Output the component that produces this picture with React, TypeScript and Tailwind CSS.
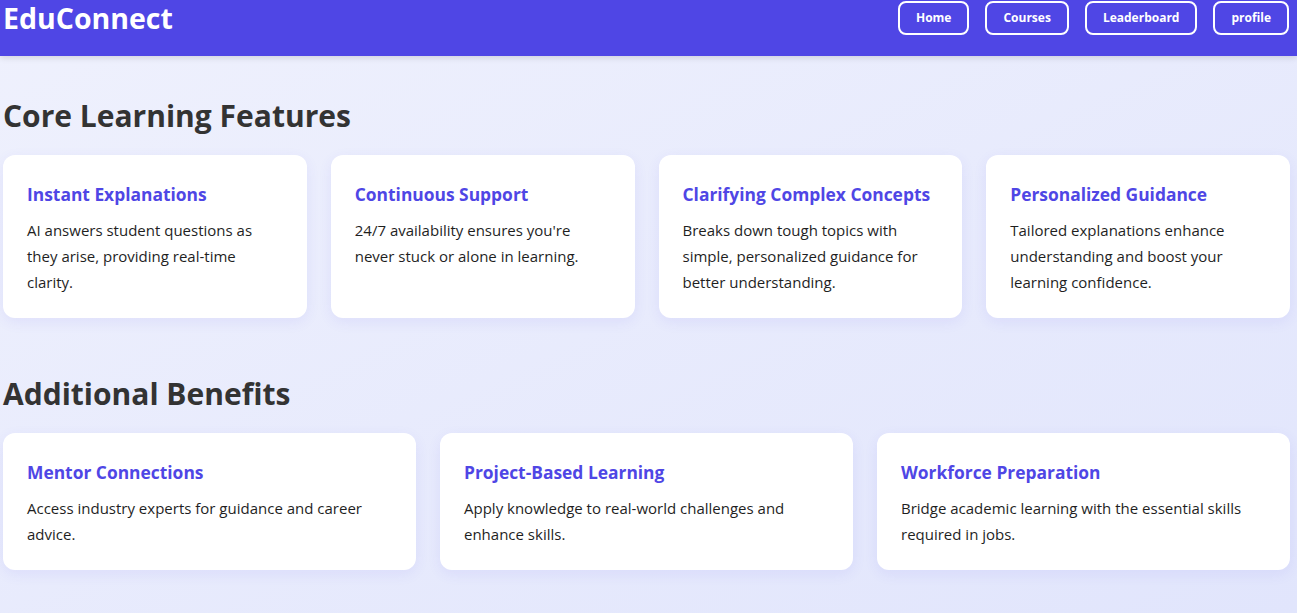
import React from "react";

const core = [
  { t: "Instant Explanations", d: "AI answers student questions as they arise, providing real-time clarity." },
  { t: "Continuous Support", d: "24/7 availability ensures you're never stuck or alone in learning." },
  { t: "Clarifying Complex Concepts", d: "Breaks down tough topics with simple, personalized guidance for better understanding." },
  { t: "Personalized Guidance", d: "Tailored explanations enhance understanding and boost your learning confidence." },
];

const extra = [
  { t: "Mentor Connections", d: "Access industry experts for guidance and career advice." },
  { t: "Project-Based Learning", d: "Apply knowledge to real-world challenges and enhance skills." },
  { t: "Workforce Preparation", d: "Bridge academic learning with the essential skills required in jobs." },
];

function Card({ t, d }: { t: string; d: string }) {
  return (
    <div className="bg-white rounded-xl px-6 pt-6 pb-[23px] shadow-[0_4px_14px_rgba(79,70,229,0.08)]">
      <h3 className="text-[17.4px] leading-[26px] font-bold text-[#4f46e5] mt-[2px] mb-[10px] whitespace-nowrap">{t}</h3>
      <p className="text-[15px] leading-[26px] text-[#1f1f1f]">{d}</p>
    </div>
  );
}

export default function App() {
  return (
    <div
      className="min-h-screen bg-gradient-to-br from-[#eff1fd] to-[#e1e5fc]"
      style={{ fontFamily: '"Open Sans", "Noto Sans", sans-serif' }}
    >
      <header className="h-[56px] bg-[#4f46e5] shadow-[0_2px_6px_rgba(0,0,0,0.12)] pl-[3px] pr-[8px]">
        <div className="h-[36px] flex items-center justify-between">
          <h1 className="text-[28.5px] font-bold text-white leading-none">EduConnect</h1>
          <nav className="flex gap-4">
            {["Home", "Courses", "Leaderboard", "profile"].map((n) => (
              <button
                key={n}
                className="h-[34px] px-4 border-2 border-white rounded-lg text-white text-[12px] font-bold"
              >
                {n}
              </button>
            ))}
          </nav>
        </div>
      </header>
      <main className="pl-[3px] pr-[7px]">
        <h2 className="text-[30px] leading-[38px] font-bold text-[#333] pt-[41px] mb-5">Core Learning Features</h2>
        <div className="grid grid-cols-4 gap-6">
          {core.map((c) => (
            <Card key={c.t} {...c} />
          ))}
        </div>
        <h2 className="text-[30px] leading-[38px] font-bold text-[#333] mt-[57px] mb-5">Additional Benefits</h2>
        <div className="grid grid-cols-3 gap-6">
          {extra.map((c) => (
            <Card key={c.t} {...c} />
          ))}
        </div>
      </main>
    </div>
  );
}
